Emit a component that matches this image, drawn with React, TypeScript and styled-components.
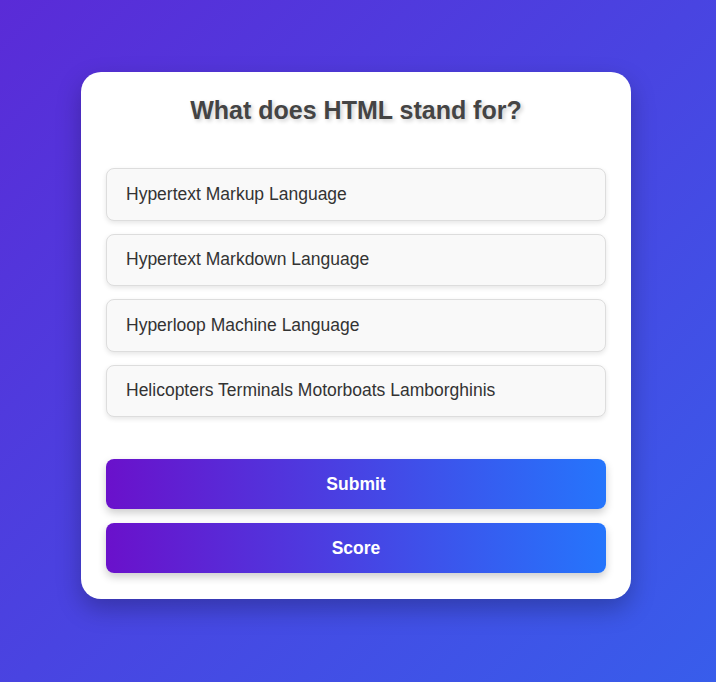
import React from "react";
import styled, { createGlobalStyle } from "styled-components";

const Global = createGlobalStyle`
  html, body { margin: 0; padding: 0; }
  body {
    font-family: "Liberation Sans", Arial, sans-serif;
    background: linear-gradient(135deg, #5a2bd7 0%, #385deb 100%);
    min-height: 682px;
  }
`;

const Page = styled.div`
  min-height: 682px;
  box-sizing: border-box;
  display: flex;
  align-items: center;
  justify-content: center;
  padding: 0 4px 11px 0;
`;

const Card = styled.div`
  width: 550px;
  box-sizing: border-box;
  background: #fff;
  border-radius: 20px;
  padding: 24px 25px 26px;
  box-shadow: 0 10px 25px rgba(0, 0, 0, 0.25);
`;

const Title = styled.h2`
  margin: 0 0 44px;
  text-align: center;
  font-size: 25px;
  line-height: 28px;
  font-weight: 700;
  color: #444;
  text-shadow: 2px 2px 4px rgba(0, 0, 0, 0.2);
`;

const Options = styled.div`
  display: flex;
  flex-direction: column;
  gap: 13px;
  margin-bottom: 42px;
`;

const Option = styled.div`
  height: 52.5px;
  box-sizing: border-box;
  display: flex;
  align-items: center;
  padding: 0 19px;
  background: #f9f9f9;
  border: 1px solid #ddd;
  border-radius: 8px;
  box-shadow: 0 2px 5px rgba(0, 0, 0, 0.1);
  font-size: 17.5px;
  color: #333;
`;

const Actions = styled.div`
  display: flex;
  flex-direction: column;
  gap: 14px;
`;

const Button = styled.button`
  height: 50px;
  width: 100%;
  border: none;
  border-radius: 8px;
  background: linear-gradient(to right, #6a11cb, #2575fc);
  color: #fff;
  font-family: "Liberation Sans", Arial, sans-serif;
  font-size: 17.5px;
  font-weight: 700;
  box-shadow: 0 4px 8px rgba(0, 0, 0, 0.2);
  cursor: pointer;
`;

const answers = [
  "Hypertext Markup Language",
  "Hypertext Markdown Language",
  "Hyperloop Machine Language",
  "Helicopters Terminals Motorboats Lamborghinis",
];

export default function App() {
  return (
    <>
      <Global />
      <Page>
        <Card>
          <Title>What does HTML stand for?</Title>
          <Options>
            {answers.map((a) => (
              <Option key={a}>{a}</Option>
            ))}
          </Options>
          <Actions>
            <Button>Submit</Button>
            <Button>Score</Button>
          </Actions>
        </Card>
      </Page>
    </>
  );
}
